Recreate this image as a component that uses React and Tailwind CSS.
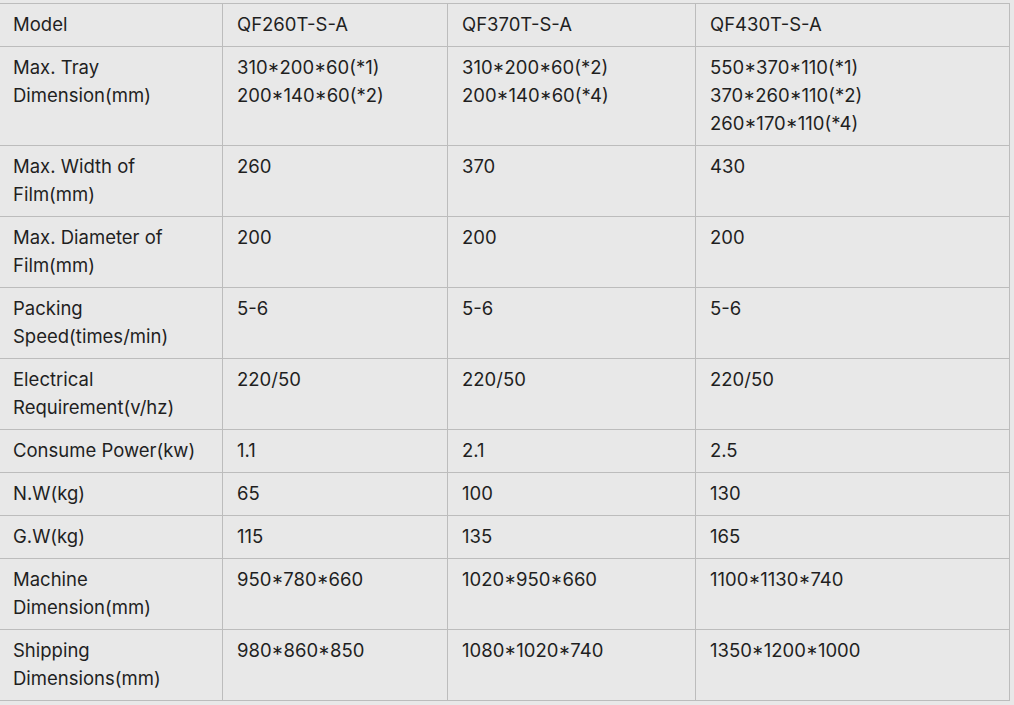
import React from "react";

const rows = [
  ["Model", ["QF260T-S-A"], ["QF370T-S-A"], ["QF430T-S-A"]],
  ["Max. Tray Dimension(mm)", ["310*200*60(*1)", "200*140*60(*2)"], ["310*200*60(*2)", "200*140*60(*4)"], ["550*370*110(*1)", "370*260*110(*2)", "260*170*110(*4)"]],
  ["Max. Width of Film(mm)", ["260"], ["370"], ["430"]],
  ["Max. Diameter of Film(mm)", ["200"], ["200"], ["200"]],
  ["Packing Speed(times/min)", ["5-6"], ["5-6"], ["5-6"]],
  ["Electrical Requirement(v/hz)", ["220/50"], ["220/50"], ["220/50"]],
  ["Consume Power(kw)", ["1.1"], ["2.1"], ["2.5"]],
  ["N.W(kg)", ["65"], ["100"], ["130"]],
  ["G.W(kg)", ["115"], ["135"], ["165"]],
  ["Machine Dimension(mm)", ["950*780*660"], ["1020*950*660"], ["1100*1130*740"]],
  ["Shipping Dimensions(mm)", ["980*860*850"], ["1080*1020*740"], ["1350*1200*1000"]],
];

const firstColText = {
  "Max. Tray Dimension(mm)": ["Max. Tray", "Dimension(mm)"],
  "Max. Width of Film(mm)": ["Max. Width of", "Film(mm)"],
  "Max. Diameter of Film(mm)": ["Max. Diameter of", "Film(mm)"],
  "Packing Speed(times/min)": ["Packing", "Speed(times/min)"],
  "Electrical Requirement(v/hz)": ["Electrical", "Requirement(v/hz)"],
  "Machine Dimension(mm)": ["Machine", "Dimension(mm)"],
  "Shipping Dimensions(mm)": ["Shipping", "Dimensions(mm)"],
};

export default function App() {
  return (
    <div
      className="w-[1014px] h-[705px] overflow-hidden bg-[#e8e8e8] pt-[3px]"
      style={{ fontFamily: "Inter, 'Noto Sans', sans-serif" }}
    >
      <table className="ml-[-3px] w-[1013px] table-fixed border-collapse text-[18.5px] leading-[28px] text-[#1f1f1f]">
        <colgroup>
          <col className="w-[225px]" />
          <col className="w-[225px]" />
          <col className="w-[248px]" />
          <col className="w-[314px]" />
        </colgroup>
        <tbody>
          {rows.map((r, i) => (
            <tr key={i}>
              <td className="border border-[#bcbcbc] align-top pl-[15px] pr-1 pt-[6px] pb-[8px] whitespace-nowrap">
                {(firstColText[r[0]] || [r[0]]).map((t, k) => (
                  <div key={k}>{t}</div>
                ))}
              </td>
              {r.slice(1).map((lines, j) => (
                <td key={j} className="border border-[#bcbcbc] align-top pl-[14px] pr-1 pt-[6px] pb-[8px] whitespace-nowrap">
                  {lines.map((t, k) => (
                    <div key={k}>{t}</div>
                  ))}
                </td>
              ))}
            </tr>
          ))}
        </tbody>
      </table>
    </div>
  );
}
